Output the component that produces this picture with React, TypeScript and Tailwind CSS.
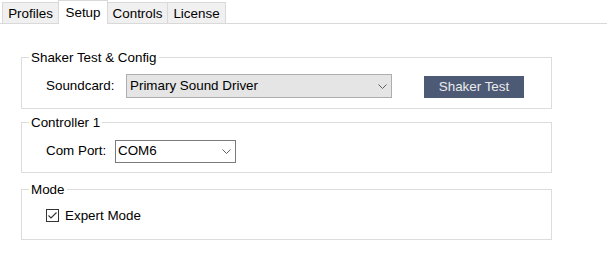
import React from "react";

function Chevron() {
  return (
    <svg width="9" height="5" viewBox="0 0 9 5" className="shrink-0">
      <path d="M0.5 0.5 L4.5 4.5 L8.5 0.5" fill="none" stroke="#606060" strokeWidth="1" />
    </svg>
  );
}

function Group({ title, h, pt, children }: { title: string; h: string; pt: string; children: React.ReactNode }) {
  return (
    <div className={`relative border border-[#dcdcdc] ${h} ${pt} flex items-center`}>
      <span className="absolute -top-[8px] left-[7px] px-[2px] bg-white leading-[15px] text-[#000]">{title}</span>
      {children}
    </div>
  );
}

export default function App() {
  return (
    <div
      className="w-[607px] h-[265px] bg-white text-[13.4px] text-black overflow-hidden"
      style={{ fontFamily: '"Liberation Sans", Arial, sans-serif' }}
    >
      {/* tab strip */}
      <div className="h-[24px] flex items-end border-b border-[#d9d9d9] pl-[2px]">
        <div className="h-[21px] w-[57px] border border-b-0 border-[#d9d9d9] bg-[#f0f0f0] flex items-center justify-center leading-[15px] pt-[1px]">
          Profiles
        </div>
        <div className="h-[24px] w-[50px] -mb-[1px] border border-b-0 border-[#d9d9d9] bg-white flex items-start justify-center leading-[15px] pt-[4px] -ml-[1px]">
          Setup
        </div>
        <div className="h-[21px] w-[60px] border border-b-0 border-l-0 border-[#d9d9d9] bg-[#f0f0f0] flex items-center justify-center leading-[15px] pt-[1px]">
          Controls
        </div>
        <div className="h-[21px] w-[58px] border border-b-0 border-l-0 border-[#d9d9d9] bg-[#f0f0f0] flex items-center justify-center leading-[15px] pt-[1px]">
          License
        </div>
      </div>

      <div className="pl-[21px] w-[552px] pt-[33px] flex flex-col">
        <Group title="Shaker Test & Config" h="h-[52px]" pt="pt-[6px]">
          <div className="pl-[24px] w-[104px] shrink-0">Soundcard:</div>
          <div className="w-[266px] h-[24px] bg-[#e5e5e5] border border-[#adadad] flex items-center justify-between pl-[3px] pr-[4px]">
            <span>Primary Sound Driver</span>
            <Chevron />
          </div>
          <div className="ml-[32px] w-[100px] h-[22px] bg-[#4c5a76] text-[#ebebeb] flex items-center justify-center mt-[2px]">
            Shaker Test
          </div>
        </Group>

        <div className="mt-[13px]">
          <Group title="Controller 1" h="h-[51px]" pt="pt-[8px]">
            <div className="pl-[24px] w-[93px] shrink-0">Com Port:</div>
            <div className="w-[121px] h-[23px] bg-white border border-[#7a7a7a] flex items-center justify-between pl-[2px] pr-[4px]">
              <span>COM6</span>
              <Chevron />
            </div>
          </Group>
        </div>

        <div className="mt-[16px]">
          <Group title="Mode" h="h-[51px]" pt="pt-[3px]">
            <div className="pl-[24px] flex items-center gap-[6px]">
              <svg width="13" height="13" viewBox="0 0 13 13" className="shrink-0">
                <rect x="0.5" y="0.5" width="12" height="12" fill="white" stroke="#333" />
                <path d="M2.5 6.5 L5 9 L10.5 3.5" fill="none" stroke="#333" strokeWidth="1.1" />
              </svg>
              <span>Expert Mode</span>
            </div>
          </Group>
        </div>
      </div>
    </div>
  );
}
